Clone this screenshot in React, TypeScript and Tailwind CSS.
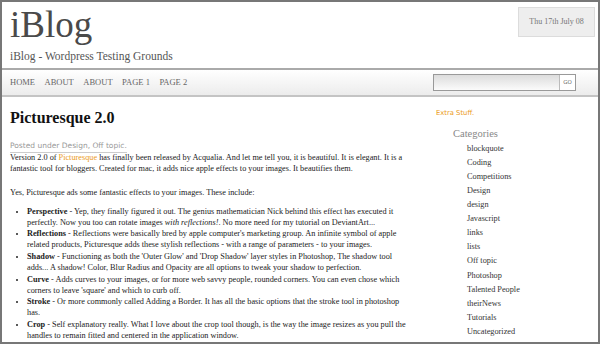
const navLinks = ['Home', 'About', 'About', 'Page 1', 'Page 2'];

const categories = [
  'blockquote',
  'Coding',
  'Competitions',
  'Design',
  'design',
  'Javascript',
  'links',
  'lists',
  'Off topic',
  'Photoshop',
  'Talented People',
  'theirNews',
  'Tutorials',
  'Uncategorized',
  'Web Design',
];

function Feature({ term, first, second }: { term: string; first: React.ReactNode; second: React.ReactNode }) {
  return (
    <li className="mt-[1.15px] first:mt-0">
      <b>{term}</b> - {first}
      <br />
      {second}
    </li>
  );
}

export default function App() {
  return (
    <div className="h-[344px] w-[600px] overflow-hidden border-2 border-[#777] bg-white font-['Liberation_Serif',serif] text-[#222]">
      {/* Header */}
      <header className="flex h-[66px] justify-between">
        <div className="pl-[8px] pt-[4px]">
          <h1 className="text-[37px] leading-[37px] text-[#4a4a4a]">iBlog</h1>
          <p className="mt-[6px] text-[11.5px] leading-[14px] text-[#555]">iBlog - Wordpress Testing Grounds</p>
        </div>
        <div className="mr-[3px] mt-[5px] flex h-[30px] w-[77px] items-center justify-center border border-[#dcdcdc] bg-[#eee] text-[8px] text-[#777]">
          Thu 17th July 08
        </div>
      </header>

      {/* Nav */}
      <nav className="flex h-[29px] items-center justify-between border-y-2 border-t-[#aaa] border-b-[#c4c4c4] bg-linear-to-b from-white to-[#ececec] pl-[8px] pr-[22px]">
        <ul className="flex gap-[9.5px] text-[8.5px] uppercase text-[#666]">
          {navLinks.map((link, i) => (
            <li key={i}>
              <a href="#">{link}</a>
            </li>
          ))}
        </ul>
        <div className="flex h-[17px] border border-[#999]">
          <input type="text" className="w-[125px] bg-linear-to-b from-[#dcdcdc] to-[#fbfbfb] outline-none" />
          <button className="w-[16px] border-l border-[#bbb] bg-white font-['DejaVu_Sans',sans-serif] text-[5.5px] text-[#666]">
            GO
          </button>
        </div>
      </nav>

      <div className="flex">
        {/* Post */}
        <main className="relative z-10 w-[398px] shrink-0 pl-[8px] pt-[11px]">
          <h2 className="text-[16px] font-bold leading-[20px] text-[#111]">Picturesque 2.0</h2>
          <p className="mt-[13px] w-fit border-b border-[#ccc] pb-[2px] font-['DejaVu_Sans',sans-serif] text-[7.5px] leading-[9px] text-[#999]">
            Posted under Design, Off topic.
          </p>

          <div className="whitespace-nowrap text-[8.25px] leading-[10.75px]">
            <p>
              Version 2.0 of{' '}
              <a href="#" className="text-[#eb9a1a]">
                Picturesque
              </a>{' '}
              has finally been released by Acqualia. And let me tell you, it is beautiful. It is elegant. It is a
              <br />
              fantastic tool for bloggers. Created for mac, it adds nice apple effects to your images. It beautifies them.
            </p>
            <p className="mt-[13.3px]">Yes, Picturesque ads some fantastic effects to your images. These include:</p>

            <ul className="mt-[8.3px] list-disc pl-[17px]">
              <Feature
                term="Perspective"
                first="Yep, they finally figured it out. The genius mathematician Nick behind this effect has executed it"
                second={
                  <>
                    perfectly. Now you too can rotate images <i>with reflections!</i>. No more need for my tutorial on DeviantArt...
                  </>
                }
              />
              <Feature
                term="Reflections"
                first="Reflections were basically bred by apple computer's marketing group. An infinite symbol of apple"
                second="related products, Picturesque adds these stylish reflections - with a range of parameters - to your images."
              />
              <Feature
                term="Shadow"
                first="Functioning as both the 'Outer Glow' and 'Drop Shadow' layer styles in Photoshop, The shadow tool"
                second="adds... A shadow! Color, Blur Radius and Opacity are all options to tweak your shadow to perfection."
              />
              <Feature
                term="Curve"
                first="Adds curves to your images, or for more web savvy people, rounded corners. You can even chose which"
                second="corners to leave 'square' and which to curb off."
              />
              <Feature
                term="Stroke"
                first="Or more commonly called Adding a Border. It has all the basic options that the stroke tool in photoshop"
                second="has."
              />
              <Feature
                term="Crop"
                first="Self explanatory really. What I love about the crop tool though, is the way the image resizes as you pull the"
                second="handles to remain fitted and centered in the application window."
              />
            </ul>
          </div>
        </main>

        {/* Sidebar */}
        <aside className="flex-1 pl-[36px] pt-[11.6px]">
          <p className="font-['DejaVu_Sans',sans-serif] text-[6.8px] leading-[9px] text-[#eb9a1a]">Extra Stuff.</p>
          <h3 className="mt-[9.4px] pl-[17px] text-[10.5px] leading-[13px] text-[#888]">Categories</h3>
          <ul className="mt-[1.7px] pl-[31px] text-[8.25px] leading-[14.1px] text-[#333]">
            {categories.map((cat) => (
              <li key={cat}>
                <a href="#">{cat}</a>
              </li>
            ))}
          </ul>
        </aside>
      </div>
    </div>
  );
}
